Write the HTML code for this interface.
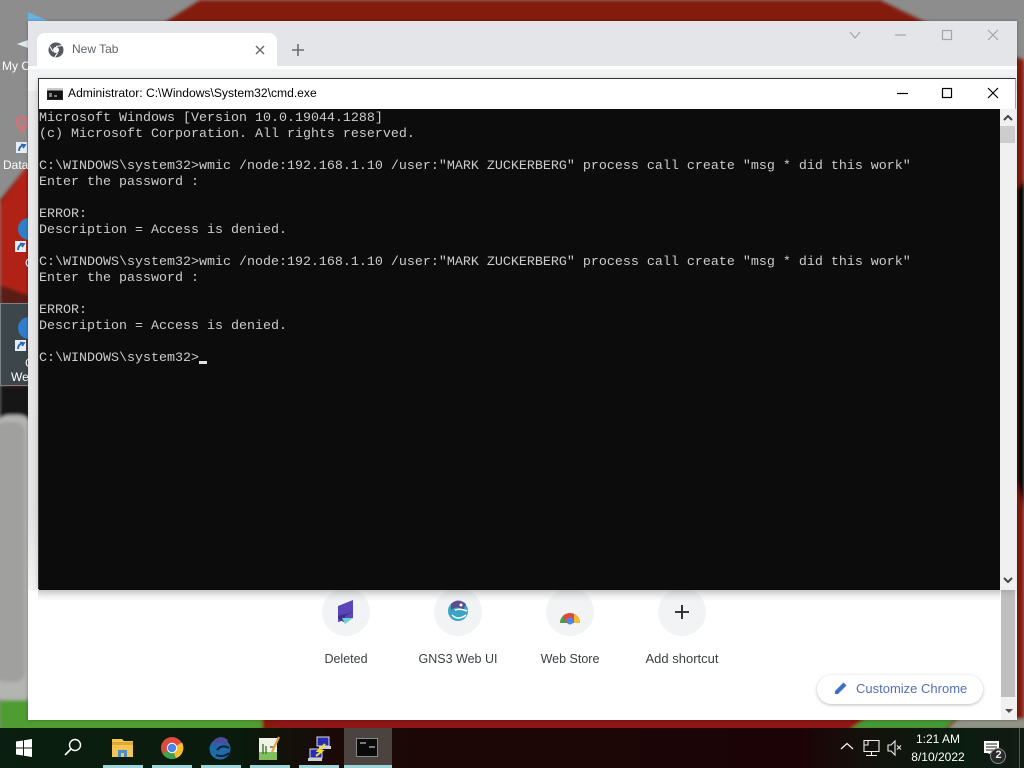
<!DOCTYPE html>
<html><head><meta charset="utf-8"><style>
*{box-sizing:border-box}
html,body{margin:0;padding:0;width:1024px;height:768px;overflow:hidden;background:#000;font-family:"Liberation Sans",sans-serif}
.a{position:absolute}
pre{margin:0;font-family:"Liberation Mono",monospace;font-size:13.33px;line-height:16px;color:#cccccc}
.lbl{position:absolute;font-size:12.5px;line-height:14px;color:#3c4043;text-align:center;width:112px;top:652px}
.circ{position:absolute;top:588px;width:48px;height:48px;border-radius:50%;background:#f1f3f4}
</style></head><body>
<svg class="a" style="left:0;top:0" width="1024" height="768">
<defs><filter id="b" x="-5%" y="-5%" width="110%" height="110%"><feGaussianBlur stdDeviation="1.5"/></filter></defs>
<rect width="1024" height="768" fill="#8d8d8d"/>
<g filter="url(#b)">
<polygon points="200,0 880,0 925,22 1024,60 1024,768 270,768 28,730 0,300 0,200 28,165 165,22" fill="#841a0f"/>
<polygon points="0,205 28,165 28,300 0,300" fill="#b02018"/>
<polygon points="0,285 28,295 28,305 0,305" fill="#5a1d18"/>
<polygon points="1017,190 1024,180 1024,510 1017,480" fill="#050505"/>
<polygon points="0,385 30,385 30,428 0,418" fill="#131313"/>
<rect x="-5" y="415" width="38" height="288" rx="14" fill="#b4b4b2"/>
<rect x="-5" y="422" width="30" height="260" rx="10" fill="#a0a09e"/>
<rect x="0" y="700" width="262" height="30" fill="#4f9c33"/>
<polygon points="262,719 860,719 845,729 285,729" fill="#8f1712"/>
<polygon points="866,719 955,719 945,729 850,729" fill="#3f9a35"/>
<polygon points="958,719 1024,719 1024,729 948,729" fill="#8f9588"/>
</g>
<rect x="0.5" y="303.5" width="28" height="82" fill="#3d474b" stroke="#7a8488"/>
<path d="M28 12 L55 24 L28 32Z" fill="#6ab2e0"/>
<path d="M17 44 L28 40 L28 48Z" fill="#e0e8ee"/>
<path d="M22 116 L28 124 L22 132 L16 124Z M16 118 H28 L22 130Z" fill="none" stroke="#c7787c" stroke-width="2"/>
<rect x="16" y="142" width="11" height="11" fill="#e6edf5"/><path d="M19 151 Q19 146 24 145 M21 144.5 L25 145 L23 148" stroke="#2a68b0" stroke-width="1.8" fill="none"/>
<circle cx="29" cy="229" r="11" fill="#2f7ec9"/><rect x="15" y="241" width="11" height="11" fill="#e6edf5"/><path d="M18 250 Q18 245 23 244 M20 243.5 L24 244 L22 247" stroke="#2a68b0" stroke-width="1.8" fill="none"/>
<circle cx="29" cy="328" r="11" fill="#2f7ec9"/><rect x="15" y="340" width="11" height="11" fill="#e6edf5"/><path d="M18 349 Q18 344 23 343 M20 342.5 L24 343 L22 346" stroke="#2a68b0" stroke-width="1.8" fill="none"/>
</svg>
<div class="a" style="left:2px;top:59px;font-size:12px;color:#fff">My C</div>
<div class="a" style="left:3px;top:158px;font-size:12px;color:#fff">Data</div>
<div class="a" style="left:25px;top:256px;font-size:12px;color:#fff">C</div>
<div class="a" style="left:25px;top:356px;font-size:12px;color:#fff">C</div>
<div class="a" style="left:11px;top:370px;font-size:12px;color:#fff">We</div>

<!-- Chrome window -->
<div class="a" style="left:28px;top:21px;width:989px;height:699px;background:#fff;overflow:hidden;box-shadow:0 0 3px rgba(0,0,0,.3)">
  <div class="a" style="left:0;top:0;width:989px;height:45px;background:#e3e5e8"></div>
  <div class="a" style="left:9px;top:12px;width:240px;height:36px;background:#fff;border-radius:8px 8px 0 0"></div>
  <div class="a" style="left:0;top:48px;width:989px;height:22px;background:#f2f3f4"></div>
  <div class="a" style="left:0;top:70px;width:10px;height:499px;background:linear-gradient(180deg,#e9eaeb,#e4e4e6 85%,#f4f4f4)"></div>
  <div class="a" style="left:44px;top:21px;font-size:12px;color:#5f6368">New Tab</div>
</div>
<svg class="a" style="left:0;top:0" width="1024" height="90">
<circle cx="56" cy="50" r="7.5" fill="#55585c"/><circle cx="56" cy="50" r="3" fill="#fff"/><path d="M56 46.5 L62.5 45.5 M52.8 51.5 L50 46.5 M57.5 53 L54.5 57.5" stroke="#fff" stroke-width="1.1"/>
<path d="M256 46 L264 54 M264 46 L256 54" stroke="#6a6e72" stroke-width="1.5"/>
<path d="M298 44 V56 M292 50 H304" stroke="#6a6e72" stroke-width="1.6"/>
<path d="M850 32 L855 38 L860 32" fill="none" stroke="#a3a5a8" stroke-width="1.2"/>
<path d="M895 35 H906" stroke="#a3a5a8" stroke-width="1.2"/>
<rect x="942.5" y="30.5" width="9" height="9" fill="none" stroke="#a3a5a8" stroke-width="1.2"/>
<path d="M988 30 L998 40 M998 30 L988 40" stroke="#a3a5a8" stroke-width="1.2"/>
</svg>

<!-- NTP shortcuts -->
<div class="circ" style="left:322px"></div>
<div class="circ" style="left:434px"></div>
<div class="circ" style="left:546px"></div>
<div class="circ" style="left:658px"></div>
<svg class="a" style="left:0;top:590px" width="1024" height="50">
<path d="M338 16 L353 10 L353 28 L338 32Z" fill="#5b45b8"/><path d="M338 26 L353 22 L345 26 L345 33 L338 28Z" fill="#3d2f90"/><path d="M342 28 L353 28 L345 34Z" fill="#6cd3d0"/>
<circle cx="458" cy="21" r="10" fill="#3aa4c4"/><path d="M451 14 Q458 7 466 14 L463 20 Q457 15 451 20Z" fill="#5a4e8e"/><path d="M452 25 Q458 31 466 25 M455 20 Q460 18 467 21" stroke="#fff" stroke-width="1.5" fill="none"/><circle cx="461" cy="15" r="1.5" fill="#fff"/>
<path d="M560 33 A10 10 0 0 1 580 33 Z" fill="#e04a3a"/><path d="M574 24 A10 10 0 0 1 580 33 H574Z" fill="#f5bb2b"/><path d="M560 33 A10 10 0 0 1 563 26 L566 33Z" fill="#3fa34d"/><circle cx="570" cy="31" r="3.5" fill="#4a86e8"/>
<path d="M682 15 V29 M675 22 H689" stroke="#202124" stroke-width="1.8"/>
</svg>
<div class="a" style="left:38px;top:589px;width:962px;height:12px;background:linear-gradient(180deg,rgba(180,180,180,.5),rgba(255,255,255,0))"></div>
<div class="lbl" style="left:290px">Deleted</div>
<div class="lbl" style="left:402px">GNS3 Web UI</div>
<div class="lbl" style="left:514px">Web Store</div>
<div class="lbl" style="left:626px;font-size:13px">Add shortcut</div>

<div class="a" style="left:817px;top:675px;width:166px;height:29px;border-radius:15px;background:#fff;box-shadow:0 1px 3px rgba(60,64,67,.35)"></div>
<svg class="a" style="left:833px;top:680px" width="16" height="16"><path d="M2 14 L2 11 L10.5 2.5 L13.5 5.5 L5 14Z" fill="#3f70c9"/></svg>
<div class="a" style="left:856px;top:681px;font-size:13px;color:#5470b4">Customize Chrome</div>

<!-- Chrome scrollbar -->
<div class="a" style="left:1001px;top:590px;width:16px;height:130px;background:#f1f1f1"></div>
<div class="a" style="left:1001px;top:590px;width:14px;height:107px;background:#bfbfbf"></div>
<svg class="a" style="left:1001px;top:705px" width="16" height="12"><path d="M4 4 H12 L8 8Z" fill="#505050"/></svg>

<!-- cmd window -->
<div class="a" style="left:38px;top:78px;width:978px;height:511px;background:#fff;border-top:1px solid #333;border-left:1px solid #333;border-right:1px solid #aaa;box-shadow:0 2px 6px rgba(0,0,0,.18)">
  <div class="a" style="left:0;top:30px;width:961px;height:481px;background:#0c0c0c"></div>
  <div class="a" style="left:961px;top:30px;width:16px;height:481px;background:#f0f0f0"></div>
  <div class="a" style="left:961px;top:47px;width:15px;height:17px;background:#cdcdcd"></div>
  <div class="a" style="left:29px;top:7px;font-size:12.1px;color:#000">Administrator: C:\Windows\System32\cmd.exe</div>
  <pre class="a" style="left:0;top:32px">Microsoft Windows [Version 10.0.19044.1288]
(c) Microsoft Corporation. All rights reserved.

C:\WINDOWS\system32&gt;wmic /node:192.168.1.10 /user:"MARK ZUCKERBERG" process call create "msg * did this work"
Enter the password :

ERROR:
Description = Access is denied.

C:\WINDOWS\system32&gt;wmic /node:192.168.1.10 /user:"MARK ZUCKERBERG" process call create "msg * did this work"
Enter the password :

ERROR:
Description = Access is denied.

C:\WINDOWS\system32&gt;</pre>
  <div class="a" style="left:160px;top:282px;width:8px;height:3px;background:#e0e0e0"></div>
</div>
<svg class="a" style="left:0;top:79px" width="1024" height="520">
<rect x="47.5" y="9.5" width="15" height="11" fill="#111" stroke="#222"/><rect x="47" y="9" width="16" height="2.5" fill="#ccc"/><path d="M49 15 H52 M49 17 H52 M54 17 H57" stroke="#eee" stroke-width="1"/>
<path d="M897 14.5 H908" stroke="#000" stroke-width="1.2"/>
<rect x="942.5" y="9.5" width="9" height="9" fill="none" stroke="#000" stroke-width="1.2"/>
<path d="M988 9 L998 19 M998 9 L988 19" stroke="#000" stroke-width="1.2"/>
<path d="M1004 41 L1008 37 L1012 41" fill="none" stroke="#444" stroke-width="2"/>
<path d="M1004 499 L1008 503 L1012 499" fill="none" stroke="#444" stroke-width="2"/>
</svg>

<!-- Taskbar -->
<div class="a" style="left:0;top:728px;width:1024px;height:40px;background:linear-gradient(90deg,#0a1f10 0,#0a1a0d 240px,#1c0806 340px,#1c0406 800px,#14100c 860px,#0a1c10 960px,#121a14 1024px)"></div>
<div class="a" style="left:344px;top:728px;width:48px;height:40px;background:#4a4340"></div>
<div class="a" style="left:103px;top:765px;width:40px;height:3px;background:#9fd4d8"></div>
<div class="a" style="left:152px;top:765px;width:40px;height:3px;background:#9fd4d8"></div>
<div class="a" style="left:201px;top:765px;width:40px;height:3px;background:#9fd4d8"></div>
<div class="a" style="left:250px;top:765px;width:40px;height:3px;background:#9fd4d8"></div>
<div class="a" style="left:299px;top:765px;width:40px;height:3px;background:#9fd4d8"></div>
<div class="a" style="left:344px;top:765px;width:48px;height:3px;background:#9fd4d8"></div>
<svg class="a" style="left:0;top:728px" width="1024" height="40">
<path d="M16 13.5 L23 12.5 V19.5 H16Z M24 12.3 L32 11 V19.5 H24Z M16 20.5 H23 V27.5 L16 26.5Z M24 20.5 H32 V29 L24 27.7Z" fill="#fff"/>
<circle cx="75" cy="17" r="5.5" fill="none" stroke="#fff" stroke-width="1.4"/><path d="M71 21 L65 27" stroke="#fff" stroke-width="1.6"/>
<path d="M112 11 H122 L124 13 H133 V29 H112Z" fill="#f3c554"/><path d="M112 14 H133 V17 H112Z" fill="#e0a930"/><path d="M118 22 H127 V29 H118Z" fill="#4a8fc9"/><rect x="121" y="25" width="3" height="4" fill="#f3c554"/>
<circle cx="172" cy="20" r="11" fill="#dd4b3e"/><path d="M172 20 L162.5 25.5 A11 11 0 0 0 176 30.3Z" fill="#3da24d"/><path d="M172 20 L176 30.3 A11 11 0 0 0 182 14.5 Z" fill="#f6c02d"/><circle cx="172" cy="20" r="5.2" fill="#fff"/><circle cx="172" cy="20" r="4.2" fill="#4a86e8"/>
<circle cx="220" cy="21" r="10.5" fill="#1f6aa8"/><path d="M214 12 Q221 6 228 12 L226 17 Q220 13 214 17Z" fill="#4f4a9a"/><path d="M217 22 Q222 16 229 20 M216 27 Q223 30 229 25" stroke="#0c1f33" stroke-width="2" fill="none"/>
<rect x="259" y="10" width="18" height="22" fill="#f0f2e8"/><rect x="259" y="24" width="18" height="8" fill="#7fbf5e"/><path d="M263 16 V26 M266 18 V26 M270 19 H274" stroke="#3a6a2a" stroke-width="1.3"/><path d="M272 24 L279 9" stroke="#e8a33a" stroke-width="2.2"/>
<rect x="317" y="9" width="12" height="9" fill="#2a2ab8" stroke="#ddd"/><rect x="310" y="21" width="12" height="9" fill="#2a2ab8" stroke="#ddd"/><rect x="308" y="30" width="14" height="3" fill="#d0d0d0"/><rect x="319" y="18" width="12" height="3" fill="#d0d0d0"/><path d="M325 16 L318 23 L322 23 L316 28" stroke="#f2e02a" stroke-width="2" fill="none"/>
<rect x="356.5" y="10.5" width="21" height="18" fill="#0a0a0a" stroke="#888"/><path d="M360 15 H366 M369 19 H375" stroke="#bbb" stroke-width="1.2"/>
<path d="M841 21 L847 15.5 L853 21" fill="none" stroke="#eee" stroke-width="1.3"/>
<path d="M864 12.5 H879 V23.5 H864Z M868 12.5 V17 H864 M871.5 23.5 V27 M866 27.5 H877" fill="none" stroke="#eee" stroke-width="1.1"/>
<path d="M888 17 H891 L895 13 V27 L891 23 H888Z" fill="none" stroke="#eee" stroke-width="1.1"/><path d="M897 17.5 L901 21.5 M901 17.5 L897 21.5" stroke="#eee" stroke-width="1.1"/>
<path d="M984 13 H999 V25 H990 V26 L987 25 H984Z" fill="#fff"/><path d="M986 16 H997 M986 19 H997 M986 22 H994" stroke="#222" stroke-width="1"/>
<circle cx="998" cy="28" r="7.5" fill="#2a2a2a" stroke="#888"/>
<rect x="1019" y="0" width="1" height="40" fill="#555"/>
</svg>
<div class="a" style="left:993px;top:749px;width:11px;text-align:center;font-size:11px;font-weight:bold;color:#eee">2</div>
<div class="a" style="left:908px;top:730px;width:60px;text-align:center;font-size:12px;color:#fff;line-height:18px">1:21 AM<br>8/10/2022</div>
</body></html>
